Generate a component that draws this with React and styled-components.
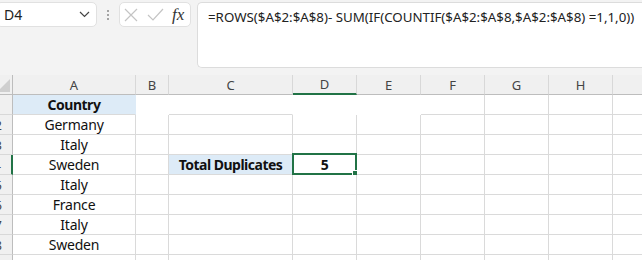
import styled, { createGlobalStyle } from "styled-components";

const Global = createGlobalStyle`
  html, body {
    margin: 0;
    padding: 0;
    background: #f3f3f3;
    width: 642px;
    height: 260px;
    overflow: hidden;
  }
  body {
    font-family: "Noto Sans", "Open Sans", sans-serif;
  }
`;

const Sheet = styled.div`
  width: 642px;
  height: 260px;
  overflow: hidden;
  display: flex;
  flex-direction: column;
`;

const Toolbar = styled.div`
  display: flex;
  align-items: flex-start;
  flex-shrink: 0;
  height: 75px;
  padding-top: 2px;
  box-sizing: border-box;
`;

const NameBox = styled.div`
  width: 101px;
  height: 25px;
  margin-left: -4px;
  padding: 0 6px 0 7px;
  box-sizing: border-box;
  background: #fff;
  border: 1px solid #e1e1e1;
  border-radius: 5px;
  display: flex;
  align-items: center;
  justify-content: space-between;
  font-size: 14px;
  color: #222;
`;

const Dots = styled.div`
  width: 22px;
  height: 25px;
  display: flex;
  flex-direction: column;
  align-items: center;
  justify-content: center;
  gap: 2px;
  span {
    width: 2px;
    height: 2px;
    border-radius: 1px;
    background: #8a8a8a;
  }
`;

const FxBox = styled.div`
  width: 72px;
  height: 25px;
  box-sizing: border-box;
  background: #fff;
  border: 1px solid #e1e1e1;
  border-radius: 5px;
  display: flex;
  align-items: center;
  padding: 0 4px;
  gap: 9px;
`;

const Fx = styled.span`
  font-family: "Liberation Serif", serif;
  font-style: italic;
  font-size: 17px;
  color: #333;
  margin-left: -1px;
`;

const FormulaBar = styled.div`
  flex: 1;
  height: 66px;
  margin-left: 6px;
  box-sizing: border-box;
  background: #fff;
  border: 1px solid #dcdcdc;
  border-right: none;
  border-radius: 5px 0 0 5px;
  padding: 5px 0 0 10px;
  font-size: 13.3px;
  color: #222;
  white-space: nowrap;
`;

const Grid = styled.div`
  display: grid;
  grid-template-columns: 13px 123px 33px 124px 64px 64px 64px 64px 64px 64px;
  grid-auto-rows: 20px;
  background: #fff;
`;

const ColHead = styled.div`
  background: #f0f0f0;
  box-sizing: border-box;
  border-right: 1px solid ${(p) => (p.$corner ? "#bdbdbd" : "#d8d8d8")};
  border-bottom: ${(p) => (p.$active ? "2px solid #217346" : "1px solid #bdbdbd")};
  display: flex;
  align-items: center;
  justify-content: center;
  font-size: 13px;
  color: #444;
  position: relative;
`;

const RowHead = styled.div`
  background: #f0f0f0;
  box-sizing: border-box;
  border-right: ${(p) => (p.$active ? "2px solid #217346" : "1px solid #bdbdbd")};
  border-bottom: 1px solid #d8d8d8;
  display: flex;
  align-items: center;
  justify-content: flex-end;
  padding-right: 10px;
  overflow: hidden;
  font-size: 13px;
  color: #444;
`;

const Cell = styled.div`
  box-sizing: border-box;
  border-right: 1px solid ${(p) => (p.$noRight ? "transparent" : "#dadada")};
  border-bottom: 1px solid ${(p) => (p.$noBottom ? "transparent" : "#dadada")};
  background: ${(p) => (p.$fill ? "#ddebf7" : "#fff")};
  display: flex;
  align-items: center;
  justify-content: center;
  font-family: "Noto Sans", "Open Sans", sans-serif;
  font-size: 14px;
  font-weight: ${(p) => (p.$bold ? 700 : 400)};
  letter-spacing: ${(p) => (p.$bold ? "-0.5px" : "-0.2px")};
  color: #111;
  white-space: nowrap;
  position: relative;
`;

const Selection = styled.div`
  position: absolute;
  left: -1px;
  top: -2px;
  right: -1px;
  bottom: -1px;
  border: 2px solid #217346;
  pointer-events: none;
  &::after {
    content: "";
    position: absolute;
    right: -4px;
    bottom: -4px;
    width: 5px;
    height: 5px;
    background: #217346;
    border: 1px solid #fff;
  }
`;

const columns = ["A", "B", "C", "D", "E", "F", "G", "H", "I"];

const countries = ["Germany", "Italy", "Sweden", "Italy", "France", "Italy", "Sweden"];

// row 1 has the odd gridless patch over B..E
const rowOneBorders = {
  A: { noRight: true },
  B: { noRight: true, noBottom: true },
  C: { noRight: true },
  D: { noRight: true, noBottom: true },
  E: { noRight: true, noBottom: true },
};

const Corner = () => (
  <svg width="12" height="19" viewBox="0 0 12 19" style={{ position: "absolute", left: 0, top: 0 }}>
    <polygon points="10,4 10,17 -3,17" fill="#cfcfcf" />
  </svg>
);

const App = () => {
  const rows = [];
  for (let r = 1; r <= 9; r++) {
    const cells = [
      <RowHead key={`h${r}`} $active={r === 4}>
        {r}
      </RowHead>,
    ];
    columns.forEach((c) => {
      let text = "";
      let bold = false;
      let fill = false;
      let extra = {};
      if (c === "A" && r === 1) {
        text = "Country";
        bold = true;
        fill = true;
      } else if (c === "A" && r >= 2 && r <= 8) {
        text = countries[r - 2];
      }
      if (r === 1 && rowOneBorders[c]) extra = rowOneBorders[c];
      if (c === "C" && r === 4) {
        text = "Total Duplicates";
        bold = true;
        fill = true;
      }
      if (c === "D" && r === 4) {
        text = "5";
        bold = true;
      }
      cells.push(
        <Cell
          key={`${c}${r}`}
          $bold={bold}
          $fill={fill}
          $noRight={extra.noRight}
          $noBottom={extra.noBottom}
        >
          {text}
          {c === "D" && r === 4 && <Selection />}
        </Cell>
      );
    });
    rows.push(...cells);
  }

  return (
    <>
      <Global />
      <Sheet>
        <Toolbar>
          <NameBox>
            <span>D4</span>
            <svg width="11" height="7" viewBox="0 0 11 7">
              <polyline points="1,1 5.5,5.5 10,1" fill="none" stroke="#444" strokeWidth="1.2" />
            </svg>
          </NameBox>
          <Dots>
            <span />
            <span />
            <span />
          </Dots>
          <FxBox>
            <svg width="14" height="14" viewBox="0 0 14 14">
              <path d="M1 1 L13 13 M13 1 L1 13" stroke="#c4c4c4" strokeWidth="1.2" fill="none" />
            </svg>
            <svg width="17" height="14" viewBox="0 0 17 14">
              <polyline points="1,7 6,12 16,1" stroke="#c4c4c4" strokeWidth="1.2" fill="none" />
            </svg>
            <Fx>fx</Fx>
          </FxBox>
          <FormulaBar>=ROWS($A$2:$A$8)- SUM(IF(COUNTIF($A$2:$A$8,$A$2:$A$8) =1,1,0))</FormulaBar>
        </Toolbar>
        <Grid>
          <ColHead $corner>
            <Corner />
          </ColHead>
          {columns.map((c) => (
            <ColHead key={c} $active={c === "D"}>
              {c}
            </ColHead>
          ))}
          {rows}
        </Grid>
      </Sheet>
    </>
  );
};

export default App;
